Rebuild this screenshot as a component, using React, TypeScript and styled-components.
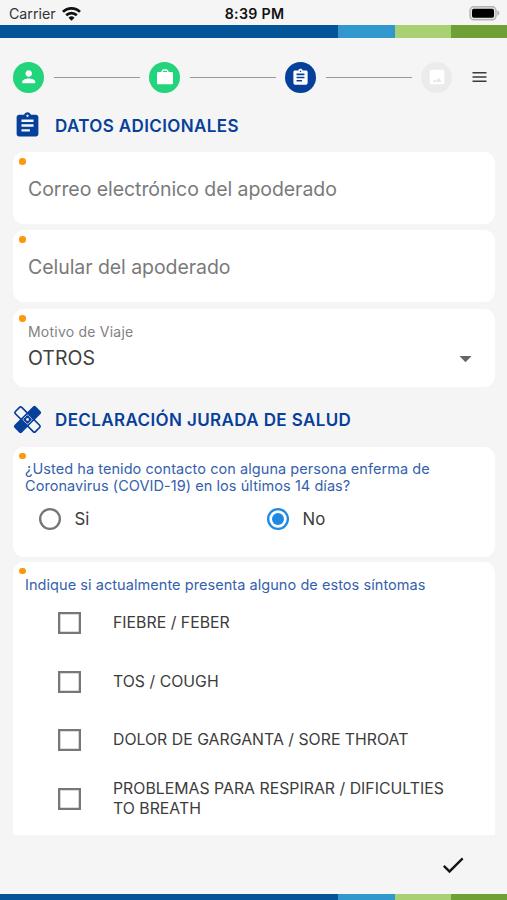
import React from "react";
import styled, { createGlobalStyle } from "styled-components";
import { MdPerson, MdAssignment, MdArrowDropDown, MdCheck } from "react-icons/md";

const GlobalStyle = createGlobalStyle`
  * { box-sizing: border-box; }
  body { margin: 0; background: #f5f5f5; font-family: Inter, "Liberation Sans", sans-serif; color: #3c3c3c; }
`;

const Screen = styled.main`
  height: 900px;
  display: flex;
  flex-direction: column;
  overflow: hidden;
`;

const StatusBar = styled.header`
  height: 25px;
  flex: none;
  display: grid;
  grid-template-columns: 1fr auto 1fr;
  align-items: center;
  padding: 2px 7px 0 9px;
  font-size: 14.2px;
  line-height: 20px;
`;

const Carrier = styled.div`
  display: flex;
  align-items: center;
  gap: 6px;
  color: #333;
`;

const Clock = styled.time`
  font-weight: 600;
  letter-spacing: 0.3px;
  color: #111;
`;

const BatterySlot = styled.div`
  display: flex;
  justify-content: flex-end;
`;

const Stripe = styled.div<{ $height: number }>`
  flex: none;
  height: ${(p) => p.$height}px;
  display: grid;
  grid-template-columns: 338px 57px 56px 1fr;
`;

const Band = styled.span<{ $color: string }>`
  background: ${(p) => p.$color};
`;

const Stepper = styled.nav`
  flex: none;
  height: 31px;
  margin: 24px 20px 0 13px;
  display: flex;
  align-items: center;
`;

const Step = styled.span<{ $color: string }>`
  flex: none;
  width: 31px;
  height: 31px;
  border-radius: 50%;
  display: grid;
  place-items: center;
  background: ${(p) => p.$color};
  color: #fff;
`;

const Connector = styled.span`
  width: 86px;
  height: 1px;
  margin: 0 9px 0 10px;
  background: #989898;
`;

const MenuButton = styled.span`
  margin-left: auto;
  display: flex;
  color: #333;
`;

const SectionTitle = styled.h2<{ $top: number }>`
  flex: none;
  height: 30px;
  margin: ${(p) => p.$top}px 13px 0;
  display: flex;
  align-items: center;
  gap: 13px;
  color: #07409a;
  font-size: 17px;
  font-weight: 600;
  letter-spacing: 0.38px;
  white-space: nowrap;
`;

const Card = styled.section<{ $height: number; $top: number; $open?: boolean }>`
  position: relative;
  flex: none;
  height: ${(p) => p.$height}px;
  margin: ${(p) => p.$top}px 12px 0 13px;
  background: #fff;
  border-radius: ${(p) => (p.$open ? "11px 11px 0 0" : "11px")};

  &::before {
    content: "";
    position: absolute;
    left: 6px;
    top: 6px;
    width: 6.5px;
    height: 6.5px;
    border-radius: 50%;
    background: #fb980c;
  }
`;

const Placeholder = styled.p`
  margin: 0;
  padding: 23.5px 15px 0;
  font-size: 19.5px;
  line-height: 26px;
  letter-spacing: -0.06px;
  color: #7a7a7a;
  white-space: nowrap;
`;

const FieldLabel = styled.p`
  margin: 0;
  padding: 14px 15px 0;
  font-size: 14px;
  line-height: 18px;
  letter-spacing: 0.22px;
  color: #828282;
`;

const SelectValue = styled.div`
  display: flex;
  align-items: center;
  justify-content: space-between;
  height: 34px;
  padding: 0 15px;
  font-size: 19.5px;
  color: #404040;
`;

const Question = styled.p<{ $top: number }>`
  margin: 0;
  padding: ${(p) => p.$top}px 12px 0;
  font-size: 14.5px;
  line-height: 17.5px;
  letter-spacing: 0.06px;
  color: #3462ac;
  white-space: nowrap;
`;

const Radios = styled.div`
  display: grid;
  grid-template-columns: 228px 1fr;
  padding: 13px 0 0 26px;
`;

const RadioOption = styled.label`
  display: flex;
  align-items: center;
  gap: 13.5px;
  height: 23px;
  font-size: 16.8px;
`;

const RadioMark = styled.span<{ $on?: boolean }>`
  width: 22px;
  height: 22px;
  border-radius: 50%;
  box-shadow: inset 0 0 0 2.3px ${(p) => (p.$on ? "#1e88e5" : "#757575")};
  display: grid;
  place-items: center;

  &::after {
    content: "";
    width: 12px;
    height: 12px;
    border-radius: 50%;
    background: ${(p) => (p.$on ? "#1e88e5" : "transparent")};
  }
`;

const Symptoms = styled.div`
  display: grid;
  grid-auto-rows: 58.7px;
  padding: 0.5px 20px 0 45px;
`;

const Symptom = styled.label`
  display: flex;
  align-items: center;
  gap: 33px;
  font-size: 15.8px;
  line-height: 19.5px;
  letter-spacing: 0.02px;
  white-space: pre-line;
`;

const Box = styled.span`
  flex: none;
  width: 23px;
  height: 22px;
  box-shadow: inset 0 0 0 2.3px #777;
  margin-right: -1px;
`;

const Actions = styled.footer`
  flex: 1;
  display: flex;
  justify-content: flex-end;
  align-items: center;
  padding: 1px 40px 0 0;
  color: #161616;
`;

const bands = ["#04549a", "#3098cc", "#a9d072", "#6fa035"];
const symptoms = [
  "FIEBRE / FEBER",
  "TOS / COUGH",
  "DOLOR DE GARGANTA / SORE THROAT",
  "PROBLEMAS PARA RESPIRAR / DIFICULTIES\nTO BREATH",
];

const BrandStripe = ({ height }: { height: number }) => (
  <Stripe $height={height}>
    {bands.map((c) => (
      <Band key={c} $color={c} />
    ))}
  </Stripe>
);

const WifiIcon = () => (
  <svg width="19" height="14" viewBox="0 0 19 14" fill="none" stroke="#111" strokeWidth="2.7">
    <path d="M1 4.9a12 12 0 0 1 17 0" />
    <path d="M4.2 8.3a7.6 7.6 0 0 1 10.6 0" />
    <path d="M9.5 13.8 6.5 10.8a4.3 4.3 0 0 1 6 0z" fill="#111" stroke="none" />
  </svg>
);

const BatteryIcon = () => (
  <svg width="31" height="15" viewBox="0 0 31 15">
    <rect x="1" y="0.8" width="26" height="13" rx="3.8" fill="#e4e4e4" stroke="#b4b4b4" strokeWidth="1.4" />
    <rect x="3" y="2.8" width="22" height="9" rx="1.8" fill="#000" />
    <path d="M28.3 4.6c1.6.6 2 1.5 2 2.6s-.4 2-2 2.6z" fill="#b4b4b4" />
  </svg>
);

const BriefcaseIcon = () => (
  <svg width="18" height="18" viewBox="0 0 18 18">
    <path d="M6.2 5V3.3L7.3 2h3.4l1.1 1.3V5" fill="none" stroke="#fff" strokeWidth="1.4" />
    <rect x="1" y="4" width="16" height="12.2" rx="1" fill="#fff" />
  </svg>
);

const PhotoIcon = () => (
  <svg width="18" height="18" viewBox="0 0 18 18">
    <rect x="1.7" y="1.7" width="14.6" height="14.6" rx="1.5" fill="#fff" />
    <path d="M4.5 13.8 6.6 11.6 8.3 13 10.8 10l2.9 3.8z" fill="#e4e4e4" />
  </svg>
);

const MenuIcon = () => (
  <svg width="15" height="12" viewBox="0 0 15 12" stroke="#3a3a3a" strokeWidth="1.5">
    <path d="M.5 1.7h14M.5 6h14M.5 10.3h14" />
  </svg>
);

const BandageIcon = () => (
  <svg width="29" height="29" viewBox="0 0 29 29">
    <rect x="0.3" y="10" width="28.4" height="9" rx="1.6" transform="rotate(45 14.5 14.5)" fill="none" stroke="#07409a" strokeWidth="1.7" />
    <rect x="-0.6" y="9.2" width="30.2" height="10.6" rx="2" transform="rotate(-45 14.5 14.5)" fill="#07409a" />
    <rect x="11" y="11" width="7" height="7" rx="1.2" transform="rotate(45 14.5 14.5)" fill="none" stroke="#c3d0e6" strokeWidth="0.9" />
    <circle cx="14.5" cy="14.5" r="1.4" fill="#e6ebf4" />
  </svg>
);

export default function App() {
  return (
    <Screen>
      <GlobalStyle />
      <StatusBar>
        <Carrier>
          Carrier
          <WifiIcon />
        </Carrier>
        <Clock>8:39 PM</Clock>
        <BatterySlot>
          <BatteryIcon />
        </BatterySlot>
      </StatusBar>
      <BrandStripe height={12.5} />
      <Stepper>
        <Step $color="#22d47b"><MdPerson size={19.5} /></Step>
        <Connector />
        <Step $color="#22d47b"><BriefcaseIcon /></Step>
        <Connector />
        <Step $color="#07409a"><MdAssignment size={19} /></Step>
        <Connector />
        <Step $color="#ebebeb"><PhotoIcon /></Step>
        <MenuButton><MenuIcon /></MenuButton>
      </Stepper>
      <SectionTitle $top={18}>
        <MdAssignment size={29} />
        DATOS ADICIONALES
      </SectionTitle>
      <Card $height={72} $top={11.5}>
        <Placeholder>Correo electrónico del apoderado</Placeholder>
      </Card>
      <Card $height={72} $top={6}>
        <Placeholder>Celular del apoderado</Placeholder>
      </Card>
      <Card $height={78} $top={7}>
        <FieldLabel>Motivo de Viaje</FieldLabel>
        <SelectValue>
          OTROS
          <MdArrowDropDown size={29} color="#666" />
        </SelectValue>
      </Card>
      <SectionTitle $top={17.5}>
        <BandageIcon />
        DECLARACIÓN JURADA DE SALUD
      </SectionTitle>
      <Card $height={110} $top={12}>
        <Question $top={13}>
          ¿Usted ha tenido contacto con alguna persona enferma de
          <br />
          Coronavirus (COVID-19) en los últimos 14 días?
        </Question>
        <Radios>
          <RadioOption><RadioMark />Si</RadioOption>
          <RadioOption><RadioMark $on />No</RadioOption>
        </Radios>
      </Card>
      <Card $height={273} $top={5} $open>
        <Question $top={14}>Indique si actualmente presenta alguno de estos síntomas</Question>
        <Symptoms>
          {symptoms.map((s) => (
            <Symptom key={s}>
              <Box />
              {s}
            </Symptom>
          ))}
        </Symptoms>
      </Card>
      <Actions>
        <MdCheck size={28} />
      </Actions>
      <BrandStripe height={6} />
    </Screen>
  );
}
